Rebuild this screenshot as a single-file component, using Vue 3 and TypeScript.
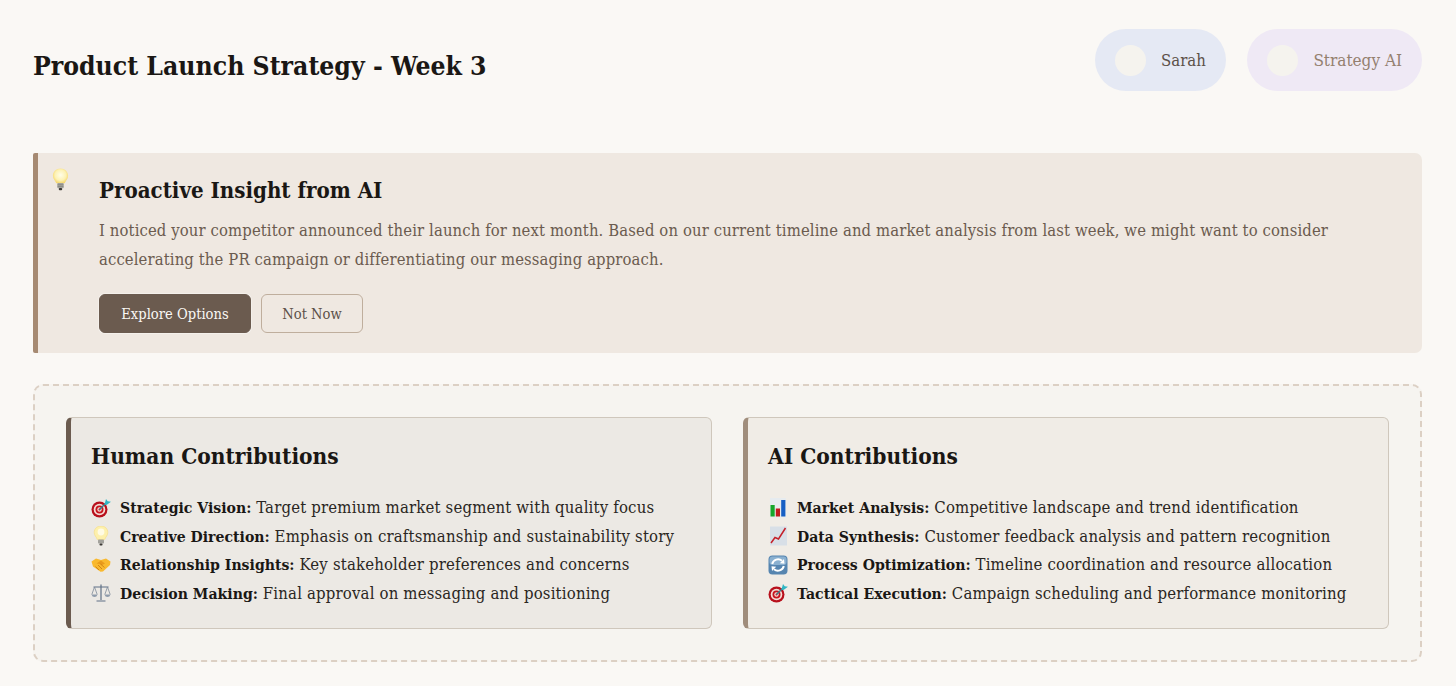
<script setup lang="ts">
type Item = { icon: string; label: string; text: string }
const human: Item[] = [
  { icon: 'target', label: 'Strategic Vision:', text: 'Target premium market segment with quality focus' },
  { icon: 'bulb', label: 'Creative Direction:', text: 'Emphasis on craftsmanship and sustainability story' },
  { icon: 'hands', label: 'Relationship Insights:', text: 'Key stakeholder preferences and concerns' },
  { icon: 'scale', label: 'Decision Making:', text: 'Final approval on messaging and positioning' },
]
const ai: Item[] = [
  { icon: 'bars', label: 'Market Analysis:', text: 'Competitive landscape and trend identification' },
  { icon: 'chart', label: 'Data Synthesis:', text: 'Customer feedback analysis and pattern recognition' },
  { icon: 'cycle', label: 'Process Optimization:', text: 'Timeline coordination and resource allocation' },
  { icon: 'target', label: 'Tactical Execution:', text: 'Campaign scheduling and performance monitoring' },
]
const cards = [
  { title: 'Human Contributions', items: human, cls: 'human' },
  { title: 'AI Contributions', items: ai, cls: 'ai' },
]
</script>

<template>
  <div class="page">
    <header class="header">
      <h1>Product Launch Strategy - Week 3</h1>
      <div class="people">
        <div class="pill sarah"><span class="dot"></span><span>Sarah</span></div>
        <div class="pill strategy"><span class="dot"></span><span>Strategy AI</span></div>
      </div>
    </header>

    <section class="insight">
      <svg class="bulb-big" viewBox="0 0 20 26">
        <defs>
          <radialGradient id="glow" cx="50%" cy="45%" r="55%">
            <stop offset="0" stop-color="#fffde8" />
            <stop offset="0.65" stop-color="#fdf2b4" />
            <stop offset="1" stop-color="#f6d76e" />
          </radialGradient>
        </defs>
        <path d="M10 .8C5.4.8 2 4.200 2 8.400c0 3.400 2.600 5 3.600 8h8.800c1-3 3.600-4.600 3.600-8C18 4.200 14.600.8 10 .8Z" fill="url(#glow)" />
        <rect x="6.600" y="16.200" width="6.800" height="5.400" rx="1" fill="#a3a29c" />
        <path d="M7 18h6M7 19.800h6" stroke="#77766f" stroke-width=".6" />
        <rect x="8.200" y="21.500" width="3.600" height="2.200" rx="1" fill="#3d3a36" />
      </svg>
      <div class="insight-body">
        <h2>Proactive Insight from AI</h2>
        <p>I noticed your competitor announced their launch for next month. Based on our current timeline and market analysis from last week, we might want to consider accelerating the PR campaign or differentiating our messaging approach.</p>
        <div class="actions">
          <button class="primary">Explore Options</button>
          <button class="ghost">Not Now</button>
        </div>
      </div>
    </section>

    <section class="board">
      <article v-for="card in cards" :key="card.title" class="card" :class="card.cls">
        <h3>{{ card.title }}</h3>
        <ul>
          <li v-for="item in card.items" :key="item.label">
            <svg class="ico" viewBox="0 0 20 20">
              <template v-if="item.icon === 'target'">
                <circle cx="8.500" cy="11.500" r="8" fill="#b8101c" />
                <circle cx="8.500" cy="11.500" r="5.800" fill="#f3ddd6" />
                <circle cx="8.500" cy="11.500" r="4" fill="#c8141e" />
                <circle cx="8.500" cy="11.500" r="2.200" fill="#f3ddd6" />
                <circle cx="8.500" cy="11.500" r="1" fill="#c8141e" />
                <path d="M8.500 11.500 15.500 4.500" stroke="#3a7f8c" stroke-width="1.400" />
                <path d="M13.500 6.500 15 1 16.700 3.300 20 3.800 15.500 7Z" fill="#2fb6c4" />
              </template>
              <template v-else-if="item.icon === 'bulb'">
                <path d="M10 0C6 0 3.200 2.900 3.200 6.500c0 3 2.300 4.400 3.100 7h7.400c.8-2.600 3.100-4 3.100-7C16.800 2.900 14 0 10 0Z" fill="#fdf0ac" stroke="#f6dc80" stroke-width=".6" />
                <circle cx="10" cy="6" r="3.400" fill="#fffbe4" />
                <rect x="7" y="13.500" width="6" height="4" rx=".8" fill="#a3a29c" />
                <rect x="8.500" y="17.500" width="3" height="2" rx=".8" fill="#3d3a36" />
              </template>
              <template v-else-if="item.icon === 'hands'">
                <path d="M.5 6.500 5 3.500 10 5 15 3.500 19.500 6.500 19 10 12 16.500 9.500 16.800 2 11.500Z" fill="#f9b92e" />
                <path d="M5.500 8.500 10 5.500 14 8.500 10.500 10.200 8.800 9Z" fill="#e89a1c" />
                <path d="M4.500 11.500 8 15M7 10 11 14M9.500 9 13.500 12.500" stroke="#cf7f14" stroke-width=".9" fill="none" />
              </template>
              <template v-else-if="item.icon === 'scale'">
                <path d="M10 1.500V17M2.500 4H17.500M5.500 18H14.500" stroke="#5f7186" stroke-width="1.200" fill="none" />
                <path d="M3.500 4 .8 11.500M3.500 4 6.200 11.500M16.500 4 13.800 11.500M16.500 4 19.200 11.500" stroke="#7d8a99" stroke-width=".8" fill="none" />
                <path d="M.5 11.500H6.500Q5.800 14 3.500 14T.5 11.500ZM13.500 11.500H19.500Q18.800 14 16.500 14T13.500 11.500Z" fill="#8f9cab" />
              </template>
              <template v-else-if="item.icon === 'bars'">
                <rect x="2" y="0" width="16" height="19.500" fill="#e6ebef" />
                <rect x="2.500" y="7" width="4.200" height="11.500" fill="#15a52b" />
                <rect x="7.800" y="10.500" width="4.200" height="8" fill="#c21a1f" />
                <rect x="13.200" y="2" width="4.200" height="16.500" fill="#175fc4" />
              </template>
              <template v-else-if="item.icon === 'chart'">
                <rect x="2" y=".5" width="17" height="19" fill="#d8dfe7" />
                <path d="M3 17 7 11.500 10.500 13 17.500 2" fill="none" stroke="#c4202a" stroke-width="1.500" />
              </template>
              <template v-else-if="item.icon === 'cycle'">
                <rect x=".5" y=".5" width="19" height="19" rx="4" fill="#5685b0" />
                <rect x="1.500" y="1.500" width="17" height="8.500" rx="3" fill="#8ab0d0" />
                <path d="M4.200 9A6 6 0 0 1 14 5.800" fill="none" stroke="#fff" stroke-width="2" />
                <path d="M15.800 11A6 6 0 0 1 6 14.200" fill="none" stroke="#fff" stroke-width="2" />
                <path d="M11.800 8.200 16.500 8.800 16 4ZM8.200 11.800 3.500 11.200 4 16Z" fill="#fff" />
              </template>
            </svg>
            <span class="line"><strong>{{ item.label }}</strong> {{ item.text }}</span>
          </li>
        </ul>
      </article>
    </section>
  </div>
</template>

<style>
html, body { margin: 0; background: #faf8f5; }
</style>

<style scoped>
.page {
  width: 1456px;
  height: 686px;
  overflow: hidden;
  box-sizing: border-box;
  padding: 29px 34px 0 33px;
  background: #faf8f5;
  font-family: "DejaVu Serif", "Liberation Serif", serif;
  font-stretch: condensed;
  color: #1a1a1a;
}
.header {
  display: flex;
  align-items: center;
  justify-content: space-between;
  height: 62px;
  margin-bottom: 62px;
}
h1 { margin: 10px 0 0; font-size: 26.3px; font-weight: 700; color: #1a1714; }
.people { display: flex; gap: 21px; }
.pill {
  display: flex;
  align-items: center;
  gap: 15.5px;
  height: 62px;
  padding: 0 20px;
  border-radius: 31px;
  font-size: 16.6px;
}
.sarah { background: #e5e9f4; color: #5c5048; }
.strategy { background: #efe9f5; color: #94806f; font-size: 17px; }
.dot { width: 31px; height: 31px; border-radius: 50%; background: #f5f3ee; }
.insight {
  position: relative;
  height: 200px;
  box-sizing: border-box;
  padding: 23px 20px 20px 61px;
  background: #efe8e1;
  border-left: 5px solid #a68a72;
  border-radius: 2px 7px 7px 2px;
  margin-bottom: 31px;
}
.bulb-big { position: absolute; left: 13px; top: 14px; width: 19px; height: 26px; }
h2 { margin: 0 0 13px; font-size: 22.1px; line-height: 28px; font-weight: 700; color: #1a1714; }
.insight p { margin: 0 0 20px; font-size: 16.5px; letter-spacing: 0.12px; line-height: 28.5px; color: #6b5b4f; }
.actions { display: flex; gap: 10px; }
button {
  height: 39px;
  box-sizing: border-box;
  font-family: inherit;
  font-stretch: condensed;
  font-size: 14.6px;
  border-radius: 6px;
  padding: 0;
}
.primary { width: 152px; background: #6b5b4f; color: #faf8f5; border: 1px solid #6b5b4f; box-shadow: 0 0 0 1px rgba(255, 255, 255, 0.35); }
.ghost { width: 102px; background: transparent; color: #5c5048; border: 1px solid #bfae9d; }
.board {
  display: grid;
  grid-template-columns: 1fr 1fr;
  gap: 31px;
  height: 278px;
  box-sizing: border-box;
  padding: 31px;
  border: 2px dashed #dcd0c4;
  border-radius: 10px;
  background: #f6f4f0;
}
.card {
  box-sizing: border-box;
  height: 212px;
  padding: 20px 20px 0;
  border: 1px solid #cfc7bc;
  border-left-width: 5px;
  border-radius: 6px;
}
.human { background: #ece9e4; border-left-color: #6b5b4f; }
.ai { background: #f0ece6; border-left-color: #a08d7c; }
h3 { margin: 0 0 19.5px; font-size: 22.5px; line-height: 36px; font-weight: 700; color: #1a1714; }
ul { list-style: none; margin: 0; padding: 0; }
li {
  display: flex;
  align-items: center;
  gap: 9px;
  height: 28.5px;
  color: #2a2622;
}
.line { font-size: 16.6px; letter-spacing: 0.17px; white-space: nowrap; }
strong { font-size: 15.65px; letter-spacing: 0; font-weight: 700; color: #1a1714; }
.ico { width: 20px; height: 20px; flex: none; }
</style>
